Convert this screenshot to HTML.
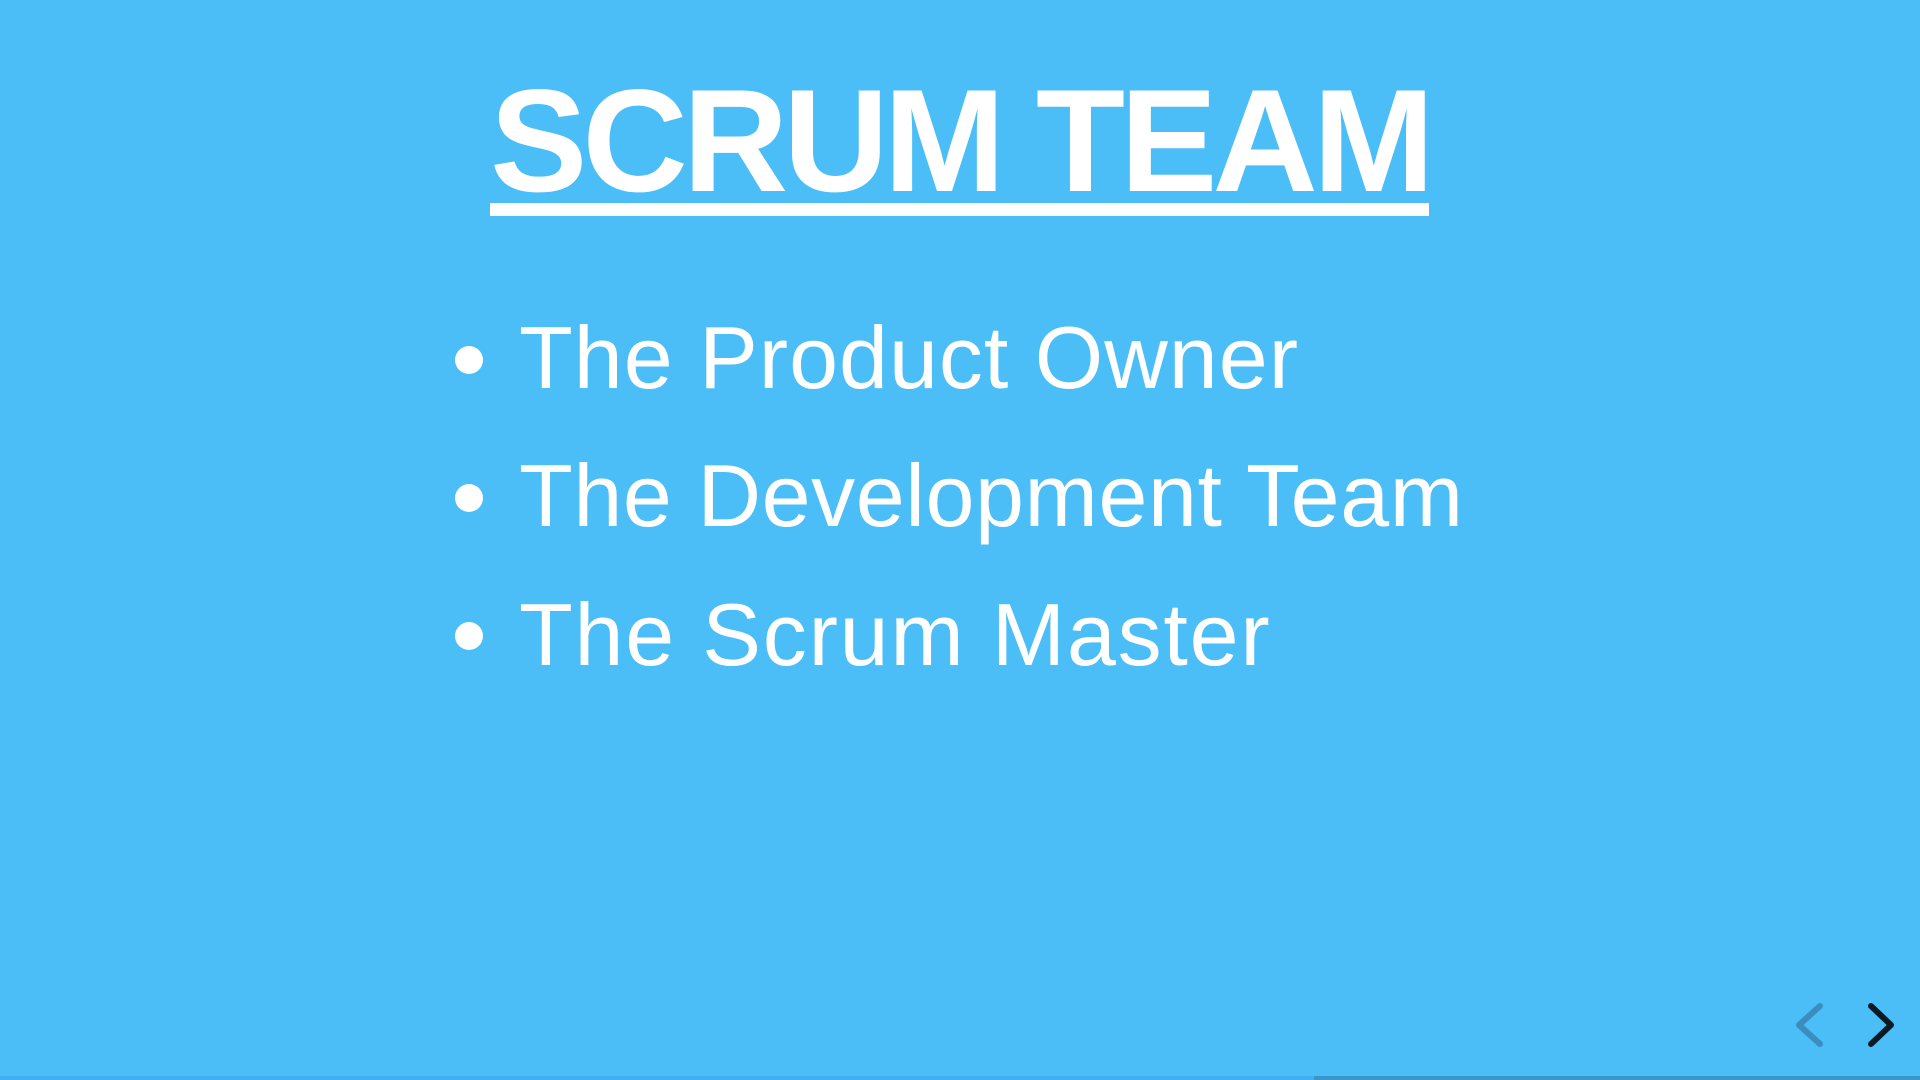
<!DOCTYPE html>
<html><head><meta charset="utf-8"><style>
html,body{margin:0;padding:0;}
body{width:1920px;height:1080px;background:#4bbdf7;position:relative;overflow:hidden;font-family:"Liberation Sans",sans-serif;color:#fff;}
.title{position:absolute;left:490px;top:61px;width:939px;text-align:center;font-size:146px;font-weight:bold;letter-spacing:-5px;line-height:160px;white-space:nowrap;}
.ul{position:absolute;left:490px;top:203px;width:939px;height:13px;background:#fff;}
.li{position:absolute;left:519px;font-size:88px;line-height:100px;white-space:nowrap;letter-spacing:1px;}
.dot{position:absolute;left:455px;width:28px;height:28px;border-radius:50%;background:#fff;}
.bar1{position:absolute;left:0;top:1076px;width:1314px;height:4px;background:#42aef5;}
.bar2{position:absolute;left:1314px;top:1076px;width:606px;height:4px;background:#3a98c8;}
</style></head><body>
<div class="title">SCRUM TEAM</div>
<div class="ul"></div>
<div class="dot" style="top:346px"></div>
<div class="li" style="top:308px">The Product Owner</div>
<div class="dot" style="top:484px"></div>
<div class="li" style="top:446px;letter-spacing:0.6px">The Development Team</div>
<div class="dot" style="top:622px"></div>
<div class="li" style="top:585px;letter-spacing:1.8px">The Scrum Master</div>
<svg style="position:absolute;left:0;top:0" width="1920" height="1080">
<polyline points="1820,1006 1799,1025 1820,1044" fill="none" stroke="#3a8dbd" stroke-width="6" stroke-linecap="round" stroke-linejoin="round"/>
<polyline points="1871,1006 1891,1025 1871,1044" fill="none" stroke="#0b1a24" stroke-width="6" stroke-linecap="round" stroke-linejoin="round"/>
</svg>
<div class="bar1"></div><div class="bar2"></div>
</body></html>
